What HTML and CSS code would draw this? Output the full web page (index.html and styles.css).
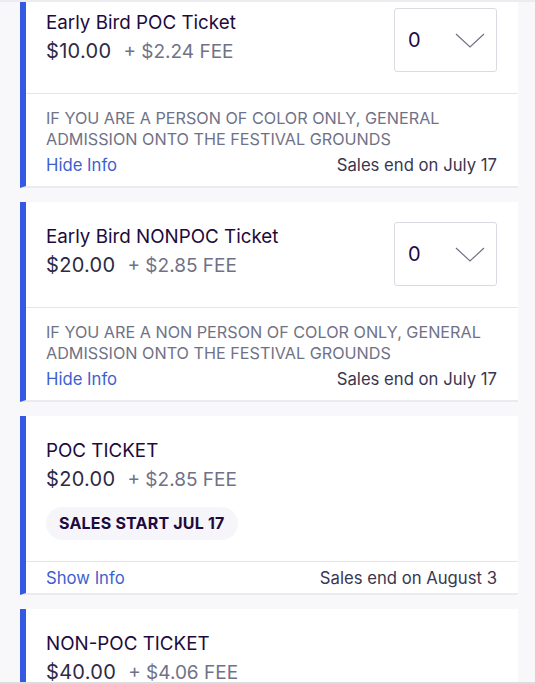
FILE: index.html
```html
<!DOCTYPE html>
<html>
<head>
<meta charset="utf-8">
<link rel="stylesheet" href="styles.css">
</head>
<body>
<div class="topline"></div>
<div class="list">
  <div class="card">
    <div class="main">
      <div class="info">
        <div class="name">Early Bird POC Ticket</div>
        <div class="price"><span class="amt">$10.00</span><span class="fee">+ $2.24 FEE</span></div>
      </div>
      <div class="select"><span class="qty">0</span><svg class="chev" width="30" height="15" viewBox="0 0 30 15"><path d="M1 1 L15 14 L29 1" fill="none" stroke="#6f7287" stroke-width="1.2"/></svg></div>
    </div>
    <div class="foot">
      <div class="desc">IF YOU ARE A PERSON OF COLOR ONLY, GENERAL ADMISSION ONTO THE FESTIVAL GROUNDS</div>
      <div class="row"><span class="link">Hide Info</span><span class="ends">Sales end on July 17</span></div>
    </div>
  </div>
  <div class="card">
    <div class="main">
      <div class="info">
        <div class="name">Early Bird NONPOC Ticket</div>
        <div class="price"><span class="amt">$20.00</span><span class="fee">+ $2.85 FEE</span></div>
      </div>
      <div class="select"><span class="qty">0</span><svg class="chev" width="30" height="15" viewBox="0 0 30 15"><path d="M1 1 L15 14 L29 1" fill="none" stroke="#6f7287" stroke-width="1.2"/></svg></div>
    </div>
    <div class="foot">
      <div class="desc">IF YOU ARE A NON PERSON OF COLOR ONLY, GENERAL ADMISSION ONTO THE FESTIVAL GROUNDS</div>
      <div class="row"><span class="link">Hide Info</span><span class="ends">Sales end on July 17</span></div>
    </div>
  </div>
  <div class="card">
    <div class="main">
      <div class="info">
        <div class="name">POC TICKET</div>
        <div class="price"><span class="amt">$20.00</span><span class="fee">+ $2.85 FEE</span></div>
        <div class="badge">SALES START JUL 17</div>
      </div>
    </div>
    <div class="foot short">
      <div class="row"><span class="link">Show Info</span><span class="ends">Sales end on August 3</span></div>
    </div>
  </div>
  <div class="card">
    <div class="main">
      <div class="info">
        <div class="name">NON-POC TICKET</div>
        <div class="price"><span class="amt">$40.00</span><span class="fee">+ $4.06 FEE</span></div>
      </div>
    </div>
  </div>
</div>
<div class="bottomline"></div>
</body>
</html>
```
FILE: styles.css
```css
html, body {
  margin: 0;
  padding: 0;
  background: #f8f8fa;
  font-family: Inter, "Noto Sans", sans-serif;
  color: #1e0a3c;
  overflow: hidden;
  height: 684px;
}
.topline {
  position: fixed;
  top: 0;
  left: 0;
  right: 0;
  height: 2px;
  background: #ececf0;
  z-index: 2;
}
.bottomline {
  position: fixed;
  bottom: 0;
  left: 0;
  right: 0;
  height: 2px;
  background: #dcdce0;
  z-index: 2;
}
.list {
  display: flex;
  flex-direction: column;
  gap: 14px;
  padding: 0 17px 0 20px;
  margin-top: -12px;
}
.card {
  background: #fff;
  border-left: 6px solid #3659e3;
  border-bottom: 2px solid #ebebef;
}
.main {
  display: flex;
  justify-content: space-between;
  align-items: flex-start;
  padding: 20px 21px 21px 20px;
}
.name {
  font-size: 18.8px;
  line-height: 29px;
  color: #1e0a3c;
}
.price {
  line-height: 29px;
  display: flex;
  align-items: baseline;
  gap: 12px;
}
.amt {
  font-size: 20px;
  letter-spacing: 0.3px;
  color: #2d2a45;
}
.fee {
  font-size: 19px;
  color: #6f7287;
}
.select {
  width: 103px;
  height: 64px;
  border: 1px solid #dbdae3;
  border-radius: 3px;
  box-sizing: border-box;
  display: flex;
  align-items: center;
  justify-content: space-between;
  padding: 0 11px 0 13px;
}
.qty {
  font-size: 20px;
  color: #1e0a3c;
}
.chev { display: block; }
.badge {
  display: inline-block;
  margin-top: 13px;
  background: #f6f5f9;
  border-radius: 17px;
  padding: 0 13px;
  height: 33px;
  line-height: 33px;
  font-size: 16px;
  letter-spacing: 0.2px;
  font-weight: 700;
  color: #1e0a3c;
}
.foot {
  border-top: 1px solid #e4e4e9;
  padding: 14px 21px 10px 20px;
}
.foot.short {
  padding: 6px 21px 4px 20px;
}
.desc {
  font-size: 16.2px;
  line-height: 21px;
  color: #6f7287;
  margin-bottom: 5px;
}
.row {
  display: flex;
  justify-content: space-between;
  font-size: 16.7px;
  line-height: 21px;
}
.link { color: #3d5fd0; }
.ends { color: #39364f; }
```
